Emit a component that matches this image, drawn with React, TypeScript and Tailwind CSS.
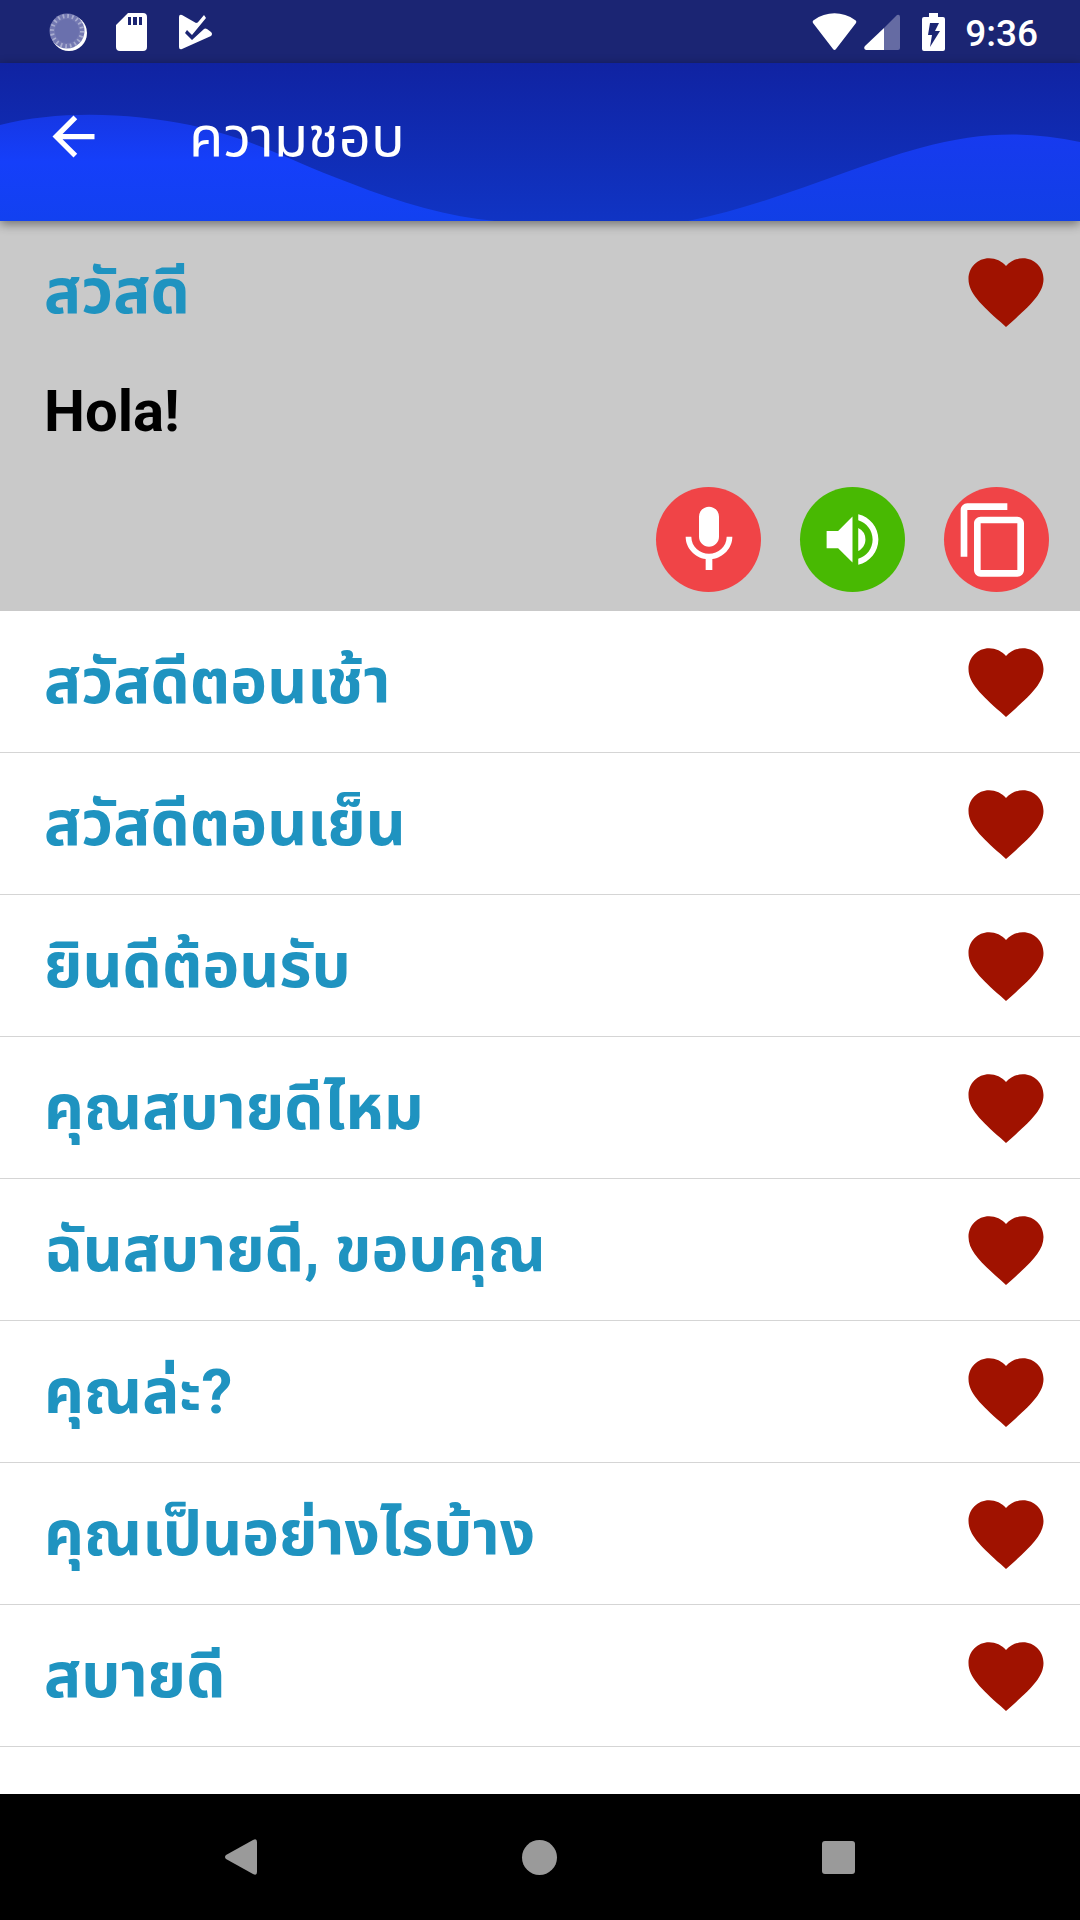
import React, { useState } from 'react'
import { MdArrowBack, MdContentCopy, MdFavorite, MdVolumeUp } from 'react-icons/md'

const PHRASES = [
  { thai: 'สวัสดี', translation: 'Hola!' },
  { thai: 'สวัสดีตอนเช้า' },
  { thai: 'สวัสดีตอนเย็น' },
  { thai: 'ยินดีต้อนรับ' },
  { thai: 'คุณสบายดีไหม' },
  { thai: 'ฉันสบายดี, ขอบคุณ' },
  { thai: 'คุณล่ะ?' },
  { thai: 'คุณเป็นอย่างไรบ้าง' },
  { thai: 'สบายดี' },
]

function StatusBar() {
  return (
    <div className="flex h-[63px] items-center justify-between bg-[#1b2573] pl-[49px] pr-[42px] text-white">
      <div className="flex items-center gap-[29px]">
        <svg className="h-[38px] w-[38px]" viewBox="0 0 38 38">
          <circle cx="20" cy="20" r="18" fill="#fff" />
          <circle cx="18" cy="18" r="17.500" fill="#7479b2" />
          <circle cx="18" cy="18" r="15" fill="none" stroke="#a9add0" strokeWidth="4" strokeDasharray="1.700 3" />
          <circle cx="18" cy="18" r="12" fill="#6a70ad" />
        </svg>
        <svg className="h-[38px] w-[31px]" viewBox="0 0 31 38">
          <path
            fill="#fff"
            fillRule="evenodd"
            d="M12 0h15a4 4 0 0 1 4 4v30a4 4 0 0 1-4 4H4a4 4 0 0 1-4-4V12zM12 4v8h3V4zm5 0v8h4V4zm6 0v8h3V4z"
          />
        </svg>
        <svg className="ml-[3px] h-[36px] w-[33px]" viewBox="0 0 33 36">
          <path
            fill="#fff"
            d="M3 1l14 8q2 0 3-2l5-6 2 3-14 17-5-5-2 3 7 7 12-11q1-1 3 0l4 3q2 2 0 4L3 35q-3 1-3-2V3q0-3 3-2z"
          />
        </svg>
      </div>
      <div className="flex items-center">
        <svg className="h-[38px] w-[45px]" viewBox="0 0 45 38">
          <path fill="#fff" d="M1 10Q0 8 2 7C14-2 31-2 43 7q2 1 1 3L24 36q-1.500 2-3 0z" />
        </svg>
        <svg className="ml-[7px] h-[38px] w-[36px]" viewBox="0 0 36 38">
          <path fill="#656ba3" d="M20 15L33 2q3-1 3 2v31q0 2-2 2H20z" />
          <path fill="#fff" d="M20 15v22H2q-3-1-1-4z" />
        </svg>
        <svg className="ml-[22px] h-[38px] w-[23px]" viewBox="0 0 23 38">
          <path
            fill="#fff"
            fillRule="evenodd"
            d="M7 0h9v4h5q2 0 2 2v30q0 2-2 2H2q-2 0-2-2V6q0-2 2-2h5zM8 10L6 22h4L8 34l10-16h-5l4-8z"
          />
        </svg>
        <span className="ml-5 pt-1 text-[37px] font-medium leading-[44px]">9:36</span>
      </div>
    </div>
  )
}

function AppBar() {
  return (
    <header className="relative z-10 h-[158px] bg-linear-to-b from-[#1023a2] to-[#1034c4] shadow-[0_3px_10px_rgba(0,0,0,0.45)]">
      {/* Wave backdrop */}
      <svg className="absolute inset-0 h-full w-full" viewBox="0 0 1080 158" preserveAspectRatio="none">
        <defs>
          <linearGradient id="wave" x1="0" y1="50" x2="0" y2="158" gradientUnits="userSpaceOnUse">
            <stop offset="0" stopColor="#1637e4" />
            <stop offset="0.450" stopColor="#153ffa" />
            <stop offset="1" stopColor="#1241f0" />
          </linearGradient>
          <linearGradient id="waveRight" x1="0" y1="70" x2="0" y2="158" gradientUnits="userSpaceOnUse">
            <stop offset="0" stopColor="#173aef" />
            <stop offset="1" stopColor="#113fe6" />
          </linearGradient>
        </defs>
        <path fill="url(#wave)" d="M0 62C60 47 130 50 190 62C260 78 290 98 350 120C400 140 450 154 495 158H0z" />
        <path fill="url(#waveRight)" d="M688 158C770 142 850 104 920 85C980 68 1030 68 1080 79V158z" />
      </svg>
      <div className="relative flex h-[147px] items-center pl-[42px]">
        <button type="button" aria-label="กลับ" className="text-white">
          <MdArrowBack className="h-[63px] w-[63px]" />
        </button>
        <h1 className="ml-[84px] text-[56px] leading-[64px] text-white">ความชอบ</h1>
      </div>
    </header>
  )
}

function Actions() {
  return (
    <div className="flex justify-end gap-[39px] pb-[19px] pr-[31px] text-white">
      <button type="button" aria-label="พูด" className="flex h-[105px] w-[105px] items-center justify-center rounded-full bg-[#f04447]">
        <svg className="h-20 w-20" viewBox="0 0 24 24" fill="currentColor">
          <path d="M12 14c1.660 0 3-1.340 3-3V5c0-1.660-1.340-3-3-3S9 3.340 9 5v6c0 1.660 1.340 3 3 3zm5.300-3c0 3-2.540 5.100-5.300 5.100S6.700 14 6.700 11H5c0 3.410 2.720 6.230 6 6.720V21h2v-3.280c3.280-.480 6-3.300 6-6.720h-1.700z" />
        </svg>
      </button>
      <button type="button" aria-label="ฟัง" className="flex h-[105px] w-[105px] items-center justify-center rounded-full bg-[#48b902]">
        <MdVolumeUp className="h-[69px] w-[69px]" />
      </button>
      <button type="button" aria-label="คัดลอก" className="flex h-[105px] w-[105px] items-center justify-center rounded-full bg-[#f04447] pr-1.5">
        <MdContentCopy className="h-20 w-20" />
      </button>
    </div>
  )
}

function PhraseRow({ thai, translation }: { thai: string; translation?: string }) {
  const [liked, setLiked] = useState(true)

  return (
    <li className={translation ? 'bg-[#c9c9c9]' : 'border-b border-[#d5d5d5]'}>
      <div className={`flex items-center justify-between pl-11 pr-[29px] ${translation ? 'h-[142px]' : 'h-[141px]'}`}>
        <h2 className="text-[62px] font-bold leading-[80px] text-[#1f93c0]">{thai}</h2>
        <button type="button" aria-label="ชอบ" aria-pressed={liked} onClick={() => setLiked(!liked)}>
          <MdFavorite className={liked ? 'h-[90px] w-[90px] text-[#a01200]' : 'h-[90px] w-[90px] text-gray-400'} />
        </button>
      </div>
      {translation && (
        <>
          <p className="mb-[41px] mt-3.5 pl-11 text-[58px] font-bold leading-[69px] text-black">{translation}</p>
          <Actions />
        </>
      )}
    </li>
  )
}

function NavBar() {
  return (
    <nav className="mt-auto grid h-[126px] grid-cols-3 place-items-center bg-black px-[92px] text-[#9a9a9a]">
      <button type="button" aria-label="Back">
        <svg className="h-9 w-8" viewBox="0 0 32 36" fill="currentColor">
          <path d="M1 16L28 1q4-2 4 2v30q0 4-4 2L1 20q-2-2 0-4z" />
        </svg>
      </button>
      <button type="button" aria-label="Home" className="h-[35px] w-[35px] rounded-full bg-current" />
      <button type="button" aria-label="Recents" className="h-[33px] w-[33px] rounded-[3px] bg-current" />
    </nav>
  )
}

function App() {
  return (
    <div className="flex min-h-screen flex-col bg-white font-[Roboto,'Noto_Sans_Thai','Noto_Sans',sans-serif]">
      <StatusBar />
      <AppBar />
      <ul>
        {PHRASES.map((phrase) => (
          <PhraseRow key={phrase.thai} {...phrase} />
        ))}
      </ul>
      <NavBar />
    </div>
  )
}

export default App
